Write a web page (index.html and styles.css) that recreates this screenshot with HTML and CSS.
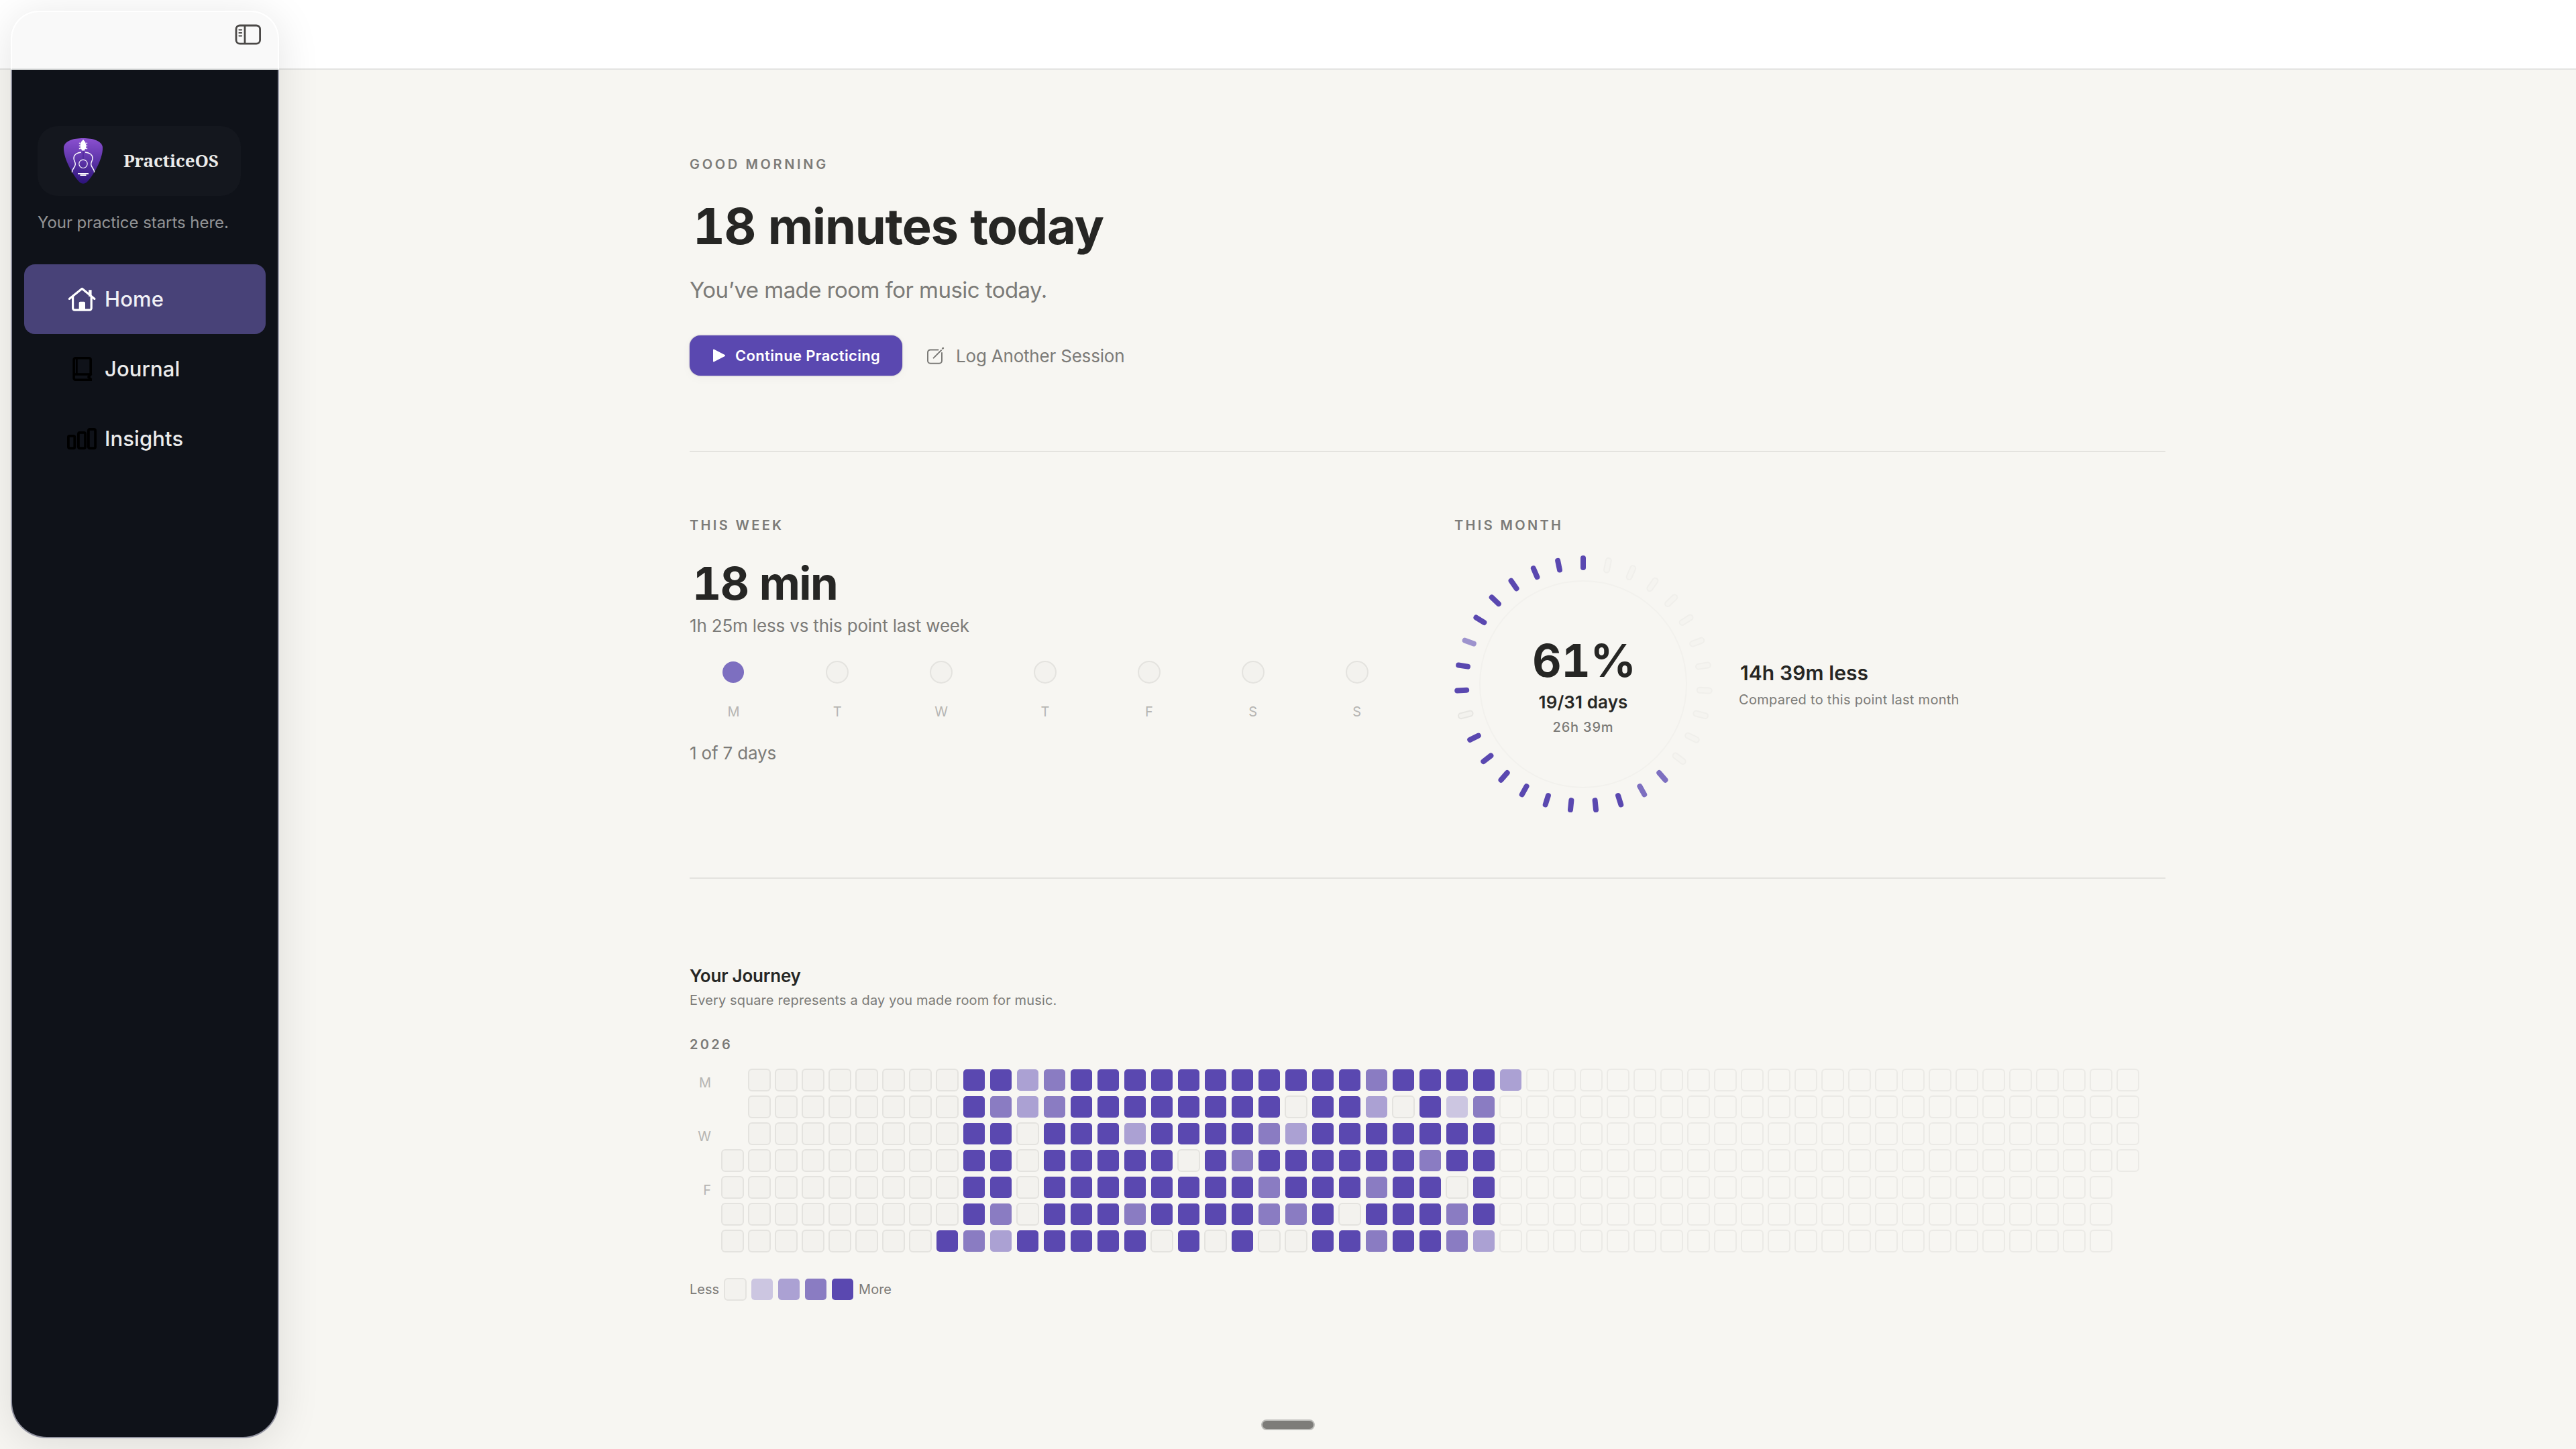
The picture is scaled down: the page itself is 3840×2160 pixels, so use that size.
FILE: index.html
```html
<!DOCTYPE html>
<html lang="en">
<head>
<meta charset="utf-8">
<title>PracticeOS</title>
<link rel="stylesheet" href="styles.css">
</head>
<body>
<div class="window">
  <header class="topbar"></header>

  <main class="main">
    <div class="content">
      <section class="hero">
        <div class="eyebrow eyebrow-hero">GOOD MORNING</div>
        <h1 class="headline">18 minutes today</h1>
        <p class="lede">You’ve made room for music today.</p>
        <div class="actions">
          <button class="btn-primary">
            <svg width="20" height="22" viewBox="0 0 20 22"><path d="M2 2.6v16.8L18 11z" fill="#fff" stroke="#fff" stroke-width="2" stroke-linejoin="round"/></svg>
            <span>Continue Practicing</span>
          </button>
          <button class="btn-ghost">
            <svg width="28" height="28" viewBox="0 0 28 28" fill="none" stroke="#7c7b78" stroke-width="2" stroke-linecap="round"><path d="M18.500 5.400H7a4 4 0 0 0-4 4v12.400a4 4 0 0 0 4 4h13a4 4 0 0 0 4-4V10"/><path d="M11.600 17.600 23 6.200"/><path d="M25.200 3.600l.6-.6" stroke-width="2.600"/></svg>
            <span>Log Another Session</span>
          </button>
        </div>
      </section>

      <section class="stats">
        <div class="week">
          <div class="eyebrow eyebrow-stat">THIS WEEK</div>
          <div class="week-total">18 min</div>
          <div class="week-delta">1h 25m less vs this point last week</div>
          <div class="days">
            <div class="day"><i class="dot dot-on"></i><span>M</span></div>
            <div class="day"><i class="dot"></i><span>T</span></div>
            <div class="day"><i class="dot"></i><span>W</span></div>
            <div class="day"><i class="dot"></i><span>T</span></div>
            <div class="day"><i class="dot"></i><span>F</span></div>
            <div class="day"><i class="dot"></i><span>S</span></div>
            <div class="day"><i class="dot"></i><span>S</span></div>
          </div>
          <div class="week-count">1 of 7 days</div>
        </div>
        <div class="month">
          <div class="eyebrow eyebrow-stat">THIS MONTH</div>
          <div class="month-row">
            <div class="ring">
              <svg class="ring-svg" id="ring" width="384" height="384" viewBox="-192 -192 384 384"><circle r="154" fill="none" stroke="#f2f1ed" stroke-width="2"/></svg>
              <div class="ring-text">
                <div class="ring-pct">61%</div>
                <div class="ring-days">19/31 days</div>
                <div class="ring-time">26h 39m</div>
              </div>
            </div>
            <div class="compare">
              <div class="compare-value">14h 39m less</div>
              <div class="compare-note">Compared to this point last month</div>
            </div>
          </div>
        </div>
      </section>

      <section class="journey">
        <h2 class="journey-title">Your Journey</h2>
        <p class="journey-sub">Every square represents a day you made room for music.</p>
        <div class="eyebrow eyebrow-year">2026</div>
        <div class="heatmap">
          <div class="row-labels"><span>M</span><span></span><span>W</span><span></span><span>F</span><span></span><span></span></div>
          <div class="cells" id="cells"></div>
        </div>
        <div class="legend">
          <span>Less</span><i class="cell l0"></i><i class="cell l1"></i><i class="cell l2"></i><i class="cell l3"></i><i class="cell l4"></i><span>More</span>
        </div>
      </section>
    </div>
  </main>

  <aside class="sidebar">
    <div class="side-head">
      <svg width="40" height="32" viewBox="0 0 40 32" fill="none" stroke="#4b4947" stroke-width="2.8"><rect x="2" y="2" width="35.6" height="27.2" rx="5.5"/><path d="M15 2v27"/><path d="M6.400 8.400h3.800M6.400 13h3.800M6.400 17.400h3.800" stroke-width="2" stroke-linecap="round"/></svg>
    </div>
    <div class="side-body">
      <div class="brand">
        <svg width="58" height="68" viewBox="0 0 58 68">
          <defs><linearGradient id="pick" x1="0" y1="0" x2="0" y2="1"><stop offset="0" stop-color="#8b50d0"/><stop offset=".5" stop-color="#5d34a8"/><stop offset="1" stop-color="#2c1379"/></linearGradient></defs>
          <path d="M0 13C2 3.500 15 0 29 0s27 3.500 29 13c1.200 16-13 42-24 53q-5 3.500-10 0C13 55-1.200 29 0 13z" fill="url(#pick)"/>
          <path d="M26 5.500 29 2l3 3.500 1.200 3.500v6.500l-2 1.500v1.500h-4.400V17l-2-1.500V9z" fill="#fff"/>
          <path d="M22.800 7.500h2M22.800 11.500h2M22.800 15.500h2M33.200 7.500h2M33.200 11.500h2M33.200 15.500h2" stroke="#fff" stroke-width="1.600"/>
          <path d="M29 19v12M29 45v7" stroke="#4a2793" stroke-width="1.200"/>
          <path d="M26 21c-5 .5-11 3-11 9 0 4 2.500 5 2.300 9-.2 5-5.300 6.500-4.800 12M32 21c5 .5 11 3 11 9 0 4-2.500 5-2.300 9 .2 5 5.300 6.500 4.800 12" fill="none" stroke="#fff" stroke-width="1.400"/>
          <circle cx="29" cy="38.300" r="6.200" fill="none" stroke="#fff" stroke-width="1.100"/>
          <path d="M21 52.800h16M24.500 55.200h9" stroke="#fff" stroke-width="1.800"/>
        </svg>
        <span class="brand-name">PracticeOS</span>
      </div>
      <p class="tagline">Your practice starts here.</p>
      <nav class="nav">
        <a class="nav-item active">
          <svg width="44" height="44" viewBox="0 0 44 44" fill="none" stroke="#fff" stroke-width="3.200" stroke-linecap="round" stroke-linejoin="round"><path d="M3.400 21.400 22.300 6.300l18.600 15.100"/><path d="M8.600 18v17.500a2.600 2.600 0 0 0 2.600 2.600h22.400a2.600 2.600 0 0 0 2.600-2.600V18"/><path d="M34.400 10.400v5.400" stroke-width="4.400" stroke-linecap="square"/><path d="M17.700 38V27.500a1.800 1.800 0 0 1 1.800-1.800h5.700a1.800 1.800 0 0 1 1.800 1.800V38z" fill="#fff" stroke="none"/></svg>
          <span>Home</span>
        </a>
        <a class="nav-item">
          <svg width="44" height="44" viewBox="0 0 44 44" fill="none" stroke="#000" stroke-width="3.600" stroke-linejoin="round"><path d="M35.200 30.500V8.200a2.400 2.400 0 0 0-2.400-2.400H12.500a2.400 2.400 0 0 0-2.400 2.400V35.800a2.400 2.400 0 0 0 2.400 2.400H37"/><path d="M10.500 30H35.500l-3.600 4 4 4"/><path d="M14.400 7v22" stroke-width="2.600"/></svg>
          <span>Journal</span>
        </a>
        <a class="nav-item">
          <svg width="44" height="44" viewBox="0 0 44 44" fill="none" stroke="#000" stroke-width="3.800"><rect x="1.900" y="17.900" width="9.400" height="18.200" rx="1.600"/><rect x="16.900" y="12.900" width="10.200" height="23.200" rx="2"/><rect x="31.900" y="7.900" width="10.200" height="28.200" rx="2"/></svg>
          <span>Insights</span>
        </a>
      </nav>
    </div>
  </aside>

  <div class="handle"></div>
</div>
<script src="app.js"></script>
</body>
</html>
```
FILE: app.js
```
// One string per weekday (Mon to Sun), one character per week of the year:
// 0-4 practice level, f = still to come, - = outside the year.
const rest = 'f'.repeat(22);
const rows = [
  '-00000000' + '442344' + '444444444344442' + rest + 'f',
  '-00000000' + '432344' + '44444404420413f' + rest + 'f',
  '-00000000' + '440444' + '24444324444444f' + rest + 'f',
  '000000000' + '440444' + '44043444444344f' + rest + 'f',
  '000000000' + '440444' + '44444344434404f' + rest,
  '000000000' + '430444' + '34444334044434f' + rest,
  '000000004' + '324444' + '40404004434432f' + rest
];

const cells = document.getElementById('cells');
for (const row of rows) {
  for (const level of row.padEnd(53, '-')) {
    const cell = document.createElement('i');
    cell.className = level === '-' ? 'cell' : 'cell l' + level;
    cells.appendChild(cell);
  }
}

// Month ring: one tick per day, clockwise from the top.
const ring = document.getElementById('ring');
const days = 'a' + 'f'.repeat(11) + 'bb' + 'aaaaaaaa' + 'e' + 'aa' + 'c' + 'aaaaa';
[...days].forEach((kind, i) => {
  const empty = kind === 'f' || kind === 'e';
  const tick = document.createElementNS('http://www.w3.org/2000/svg', 'rect');
  tick.setAttribute('x', -4);
  tick.setAttribute('y', -192);
  tick.setAttribute('width', 8);
  tick.setAttribute('height', 22);
  tick.setAttribute('rx', 4);
  tick.setAttribute('class', 'tick-' + kind + (empty ? ' tick-outline' : ''));
  tick.setAttribute('transform', 'rotate(' + (i * 360 / 31) + ')');
  ring.appendChild(tick);
});
```
FILE: styles.css
```css
* { box-sizing: border-box; margin: 0; padding: 0; }

body {
  font-family: Inter, "Liberation Sans", sans-serif;
  background: #f7f6f2;
  color: #262624;
}

.window {
  position: relative;
  width: 3840px;
  height: 2160px;
  overflow: hidden;
  display: flex;
  flex-direction: column;
}

.topbar {
  height: 104px;
  background: #fff;
  border-bottom: 2px solid #e3e3e1;
}

.main { flex: 1; padding-left: 416px; }
.content { width: 2200px; margin: 0 auto; }

.eyebrow {
  font-size: 20px;
  line-height: 24px;
  font-weight: 600;
  color: #7c7b78;
}

/* Hero */
.hero {
  height: 570px;
  padding-top: 129px;
  border-bottom: 2px solid #e4e3df;
}
.eyebrow-hero { letter-spacing: 3.65px; }
.headline {
  margin-top: 35px;
  padding-left: 5px;
  font-size: 74px;
  line-height: 90px;
  font-weight: 700;
  letter-spacing: -1.25px;
  font-variant-numeric: tabular-nums;
}
.lede {
  margin-top: 30px;
  font-size: 33px;
  line-height: 40px;
  letter-spacing: -0.55px;
  color: #7c7b78;
}
.actions { display: flex; margin-top: 48px; height: 60px; }
.actions button {
  display: flex;
  align-items: center;
  border: 0;
  font-family: inherit;
  white-space: nowrap;
}
.btn-primary {
  width: 317px;
  padding-left: 34px;
  gap: 14px;
  border-radius: 16px;
  background: #5a48b0;
  color: #fff;
  font-size: 22px;
  font-weight: 600;
  letter-spacing: 0.35px;
  box-shadow: 0 0 2px rgba(40, 30, 80, 0.5), 0 4px 16px rgba(0, 0, 0, 0.03);
}
.btn-ghost {
  margin-left: 35px;
  gap: 17px;
  background: none;
  color: #7c7b78;
  font-size: 26px;
  letter-spacing: -0.2px;
}

/* Week and month */
.stats {
  display: grid;
  grid-template-columns: 1060px 1060px;
  column-gap: 80px;
  height: 636px;
  padding-top: 97px;
  border-bottom: 2px solid #e4e3df;
}
.eyebrow-stat { letter-spacing: 3.35px; }
.week-total {
  margin-top: 35px;
  padding-left: 4px;
  font-size: 67px;
  line-height: 80px;
  font-weight: 700;
  letter-spacing: -1.6px;
  font-variant-numeric: tabular-nums;
}
.week-delta, .week-count {
  font-size: 26px;
  line-height: 32px;
  letter-spacing: -0.17px;
  color: #7c7b78;
}
.week-delta { margin-top: 7px; }
.days {
  display: grid;
  grid-template-columns: repeat(7, 1fr);
  column-gap: 24px;
  margin-top: 36px;
}
.day { display: flex; flex-direction: column; align-items: center; gap: 30px; }
.day span { font-size: 20px; line-height: 24px; color: #b6b5b2; }
.dot {
  width: 34px;
  height: 34px;
  border-radius: 50%;
  background: #f3f2ee;
  border: 2px solid #e4e3df;
}
.dot-on { background: #7d6fc0; border: 0; width: 32px; height: 32px; margin: 1px; }
.week-count { margin-top: 34px; }

.month-row { display: flex; align-items: center; gap: 40px; margin-top: 33px; }
.ring { display: grid; width: 384px; height: 384px; }
.ring-svg, .ring-text { grid-area: 1 / 1; }
.ring-svg { overflow: visible; }
.ring-text { padding-top: 117px; text-align: center; }
.ring-pct {
  padding-left: 3px;
  font-size: 67px;
  line-height: 80px;
  font-weight: 700;
  font-variant-numeric: tabular-nums;
}
.ring-days { margin-top: 6px; font-size: 26px; line-height: 32px; font-weight: 600; letter-spacing: 0.1px; }
.ring-time { margin-top: 9px; font-size: 20px; line-height: 24px; font-weight: 500; letter-spacing: 0.8px; color: #7c7b78; }
.tick-a { fill: #5a48b0; }
.tick-b { fill: #7d6fc0; }
.tick-c { fill: #9d93cd; }
.tick-e { fill: #f3f2ee; stroke: #e7e6e2; }
.tick-f { fill: #f5f4f0; stroke: #f0efeb; }
.tick-outline { stroke-width: 2px; }
.compare-value { padding-left: 2px; font-size: 30px; line-height: 36px; font-weight: 600; letter-spacing: 0.1px; }
.compare-note { margin-top: 10px; font-size: 20px; line-height: 24px; letter-spacing: 0.28px; color: #7c7b78; }

/* Journey */
.journey { padding-top: 129px; }
.journey-title { font-size: 26px; line-height: 32px; font-weight: 600; letter-spacing: -0.2px; }
.journey-sub { margin-top: 8px; font-size: 20px; line-height: 24px; letter-spacing: 0.14px; color: #7c7b78; }
.eyebrow-year { margin-top: 42px; letter-spacing: 3.3px; }
.heatmap { display: flex; gap: 16px; margin-top: 25px; }
.row-labels {
  display: grid;
  grid-auto-rows: 32px;
  row-gap: 8px;
  width: 32px;
  text-align: right;
  font-size: 20px;
  line-height: 40px;
  color: #b6b5b2;
}
.cells {
  display: grid;
  grid-template-columns: repeat(53, 32px);
  grid-auto-rows: 32px;
  gap: 8px;
}
.cell { display: block; width: 32px; height: 32px; border-radius: 5px; }
.l0, .lf { width: 34px; height: 34px; margin: -1px; border-radius: 6px; border: 2px solid #e4e3df; }
.l0 { background: #f3f2ee; }
.lf { border-color: #ebeae6; }
.l1 { background: #ccc6e1; }
.l2 { background: #aba1d3; }
.l3 { background: #8a7cc2; }
.l4 { background: #5a48b0; }
.legend {
  display: flex;
  align-items: center;
  gap: 8px;
  margin-top: 40px;
  font-size: 20px;
  line-height: 32px;
  color: #7c7b78;
}

/* Floating sidebar */
.sidebar {
  position: absolute;
  left: 16px;
  top: 16px;
  width: 400px;
  height: 2128px;
  display: flex;
  flex-direction: column;
  border-radius: 42px 42px 54px 54px;
  box-shadow: 0 8px 64px rgba(0, 0, 0, 0.11);
}
.side-head {
  height: 88px;
  display: flex;
  justify-content: flex-end;
  padding: 18px 24px 0 0;
  background: #f9f9f9;
  border: 2px solid #fff;
  border-bottom-color: #e0e2e2;
  border-radius: 42px 42px 0 0;
}
.side-body {
  flex: 1;
  background: #0f1219;
  border: 2px solid #9495a2;
  border-top: 0;
  border-radius: 0 0 54px 54px;
  padding: 84px 18px 0;
}
.brand {
  display: flex;
  align-items: center;
  gap: 31px;
  width: 303px;
  height: 104px;
  margin-left: 20px;
  padding-left: 39px;
  border-radius: 30px;
  background: #14171e;
}
.brand-name {
  padding-bottom: 2px;
  font-family: "Noto Serif", "Liberation Serif", serif;
  font-size: 26px;
  font-weight: 700;
  letter-spacing: -0.1px;
  color: #ebebea;
}
.tagline {
  margin: 25px 0 0 20px;
  font-size: 24px;
  line-height: 30px;
  letter-spacing: -0.05px;
  color: #939496;
}
.nav { margin-top: 47px; }
.nav-item {
  display: flex;
  align-items: center;
  gap: 12px;
  height: 104px;
  padding-left: 64px;
  border-radius: 16px;
  color: #ebebeb;
  font-size: 31px;
  font-weight: 500;
  letter-spacing: 0.1px;
}
.nav-item span { padding-bottom: 2px; }
.active { background: #484278; color: #f0eff5; }

/* Drag handle at the foot of the window */
.handle {
  position: absolute;
  left: 1880px;
  bottom: 28px;
  width: 80px;
  height: 16px;
  border-radius: 8px;
  background: #7d7c79;
  border: 2px solid #bdbdba;
}
```
